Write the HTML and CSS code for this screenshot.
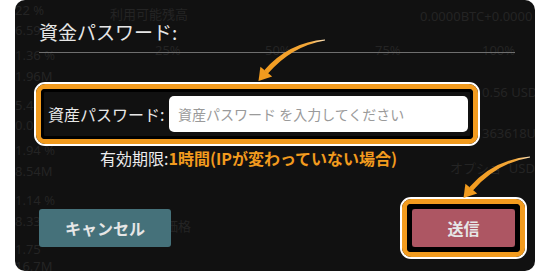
FILE: index.html
```html
<!DOCTYPE html>
<html lang="ja">
<head>
<meta charset="utf-8">
<title>資金パスワード</title>
<link rel="stylesheet" href="styles.css">
</head>
<body>
<div class="dialog">
  <div class="ghost" aria-hidden="true">
    <span class="g" style="left:0;top:2px">22 %</span>
    <span class="g" style="left:0;top:22px">6.59</span>
    <span class="g" style="left:0;top:47px">1.36 %</span>
    <span class="g" style="left:0;top:68px">1.96M</span>
    <span class="g" style="left:0;top:97px">5.49</span>
    <span class="g" style="left:0;top:117px">0.0</span>
    <span class="g" style="left:0;top:142px">1.94 %</span>
    <span class="g" style="left:0;top:163px">8.54M</span>
    <span class="g" style="left:0;top:192px">1.14 %</span>
    <span class="g" style="left:0;top:213px">8.33</span>
    <span class="g" style="left:0;top:241px">1.75</span>
    <span class="g" style="left:0;top:258px">16.7M</span>
    <span class="g" style="left:95px;top:6px">利用可能残高</span>
    <span class="g" style="left:140px;top:42px">25%</span>
    <span class="g" style="left:250px;top:42px">50%</span>
    <span class="g" style="left:360px;top:42px">75%</span>
    <span class="g" style="left:467px;top:42px">100%</span>
    <span class="g" style="left:405px;top:8px">0.0000BTC+0.0000 US</span>
    <span class="g" style="left:467px;top:84px">0.56 USD</span>
    <span class="g" style="left:467px;top:125px">363618U</span>
    <span class="g" style="left:435px;top:160px">オプショ&nbsp;&nbsp;USD</span>
    <span class="g" style="left:150px;top:218px">価格</span>
  </div>
  <h2 class="title">資金パスワード:</h2>
  <div class="sep"></div>
  <div class="hl hl-input">
    <div class="ring">
      <div class="inner field-row">
        <label class="field-label" for="pw">資産パスワード:</label>
        <input id="pw" class="field" type="password" placeholder="資産パスワード を入力してください">
      </div>
    </div>
  </div>
  <p class="expiry">有効期限:<strong>1時間(IPが変わっていない場合)</strong></p>
  <div class="actions">
    <button class="btn cancel">キャンセル</button>
    <div class="hl hl-send">
      <div class="ring">
        <div class="inner">
          <button class="btn send">送信</button>
        </div>
      </div>
    </div>
  </div>
</div>
<svg class="arrows" width="550" height="273" viewBox="0 0 550 273" aria-hidden="true">
  <defs>
    <linearGradient id="tail" x1="0" y1="0" x2="1" y2="0">
      <stop offset="0" stop-color="#f29b1e"/>
      <stop offset="0.75" stop-color="#f4a83a"/>
      <stop offset="1" stop-color="#fbe2bb"/>
    </linearGradient>
    <g id="arrow">
      <path d="M325,39.6 Q289,42.3 264.3,70.2 L267.7,73.8 Q291.5,46 325,40.4 Z" fill="url(#tail)"/>
      <path d="M258.5,81 L260.4,66.8 L272.2,76.6 Z" fill="#f29b1e"/>
    </g>
  </defs>
  <use href="#arrow"/>
  <use href="#arrow" transform="translate(205,117)"/>
</svg>
</body>
</html>
```

FILE: styles.css
```css
* { box-sizing: border-box; }

html, body {
  margin: 0;
  padding: 0;
  background: #ffffff;
  width: 550px;
  height: 273px;
  overflow: hidden;
}

body {
  position: relative;
  font-family: "Noto Sans CJK JP", "Noto Sans", sans-serif;
}

.dialog {
  position: relative;
  margin-left: 15px;
  width: 520px;
  height: 271px;
  background: #111111;
  border-radius: 10px;
  padding: 20px 20px 0 24px;
  overflow: hidden;
}

.ghost {
  position: absolute;
  inset: 0;
  pointer-events: none;
}

.g {
  position: absolute;
  font-family: "Noto Sans", "Noto Sans CJK JP", sans-serif;
  font-size: 13px;
  line-height: 16px;
  color: #242424;
  white-space: nowrap;
}

.title {
  position: relative;
  margin: 0;
  font-size: 19px;
  line-height: 24px;
  font-weight: 400;
  color: #e6e6e6;
}

.sep {
  position: relative;
  margin-top: 8px;
  height: 1px;
  background: #6f6f6f;
}

.hl {
  position: relative;
  border: 2px solid #ffffff;
  border-radius: 11px;
}

.ring {
  border: 5px solid #f29b1e;
  border-radius: 9px;
}

.inner {
  background: #111111;
  border: 3px solid #000000;
  border-radius: 4px;
}

.hl-input {
  margin-top: 29px;
  margin-left: -5px;
  width: 446px;
}

.field-row {
  display: flex;
  align-items: center;
  height: 50px;
  padding: 0 0 0 4px;
}

.field-label {
  font-size: 16px;
  line-height: 20px;
  color: #e8e8e8;
  white-space: nowrap;
  width: 121px;
}

.field {
  width: 299px;
  height: 36px;
  border: none;
  border-radius: 5px;
  background: #ffffff;
  padding: 0 0 0 9px;
  font-family: "Noto Sans CJK JP", sans-serif;
  font-size: 14px;
  outline: none;
}

.field::placeholder {
  color: #9a9a9a;
}

.expiry {
  position: relative;
  margin: 0;
  padding-left: 61px;
  font-size: 16px;
  line-height: 24px;
  color: #ececec;
  white-space: nowrap;
}

.expiry strong {
  color: #f29b1e;
  font-weight: 700;
}

.actions {
  position: relative;
  margin-top: 27px;
  margin-right: -12px;
  display: flex;
  justify-content: space-between;
  align-items: center;
}

.btn {
  height: 38px;
  border: none;
  border-radius: 3px;
  font-family: "Noto Sans CJK JP", sans-serif;
  font-size: 16px;
  font-weight: 700;
  color: #e6e6e6;
  padding: 0;
}

.cancel {
  width: 132px;
  background: #45717a;
}

.hl-send .inner {
  border-width: 5px;
  display: flex;
}

.send {
  width: 103px;
  background: #ad5663;
}

.arrows {
  position: absolute;
  left: 0;
  top: 0;
  pointer-events: none;
}
```
